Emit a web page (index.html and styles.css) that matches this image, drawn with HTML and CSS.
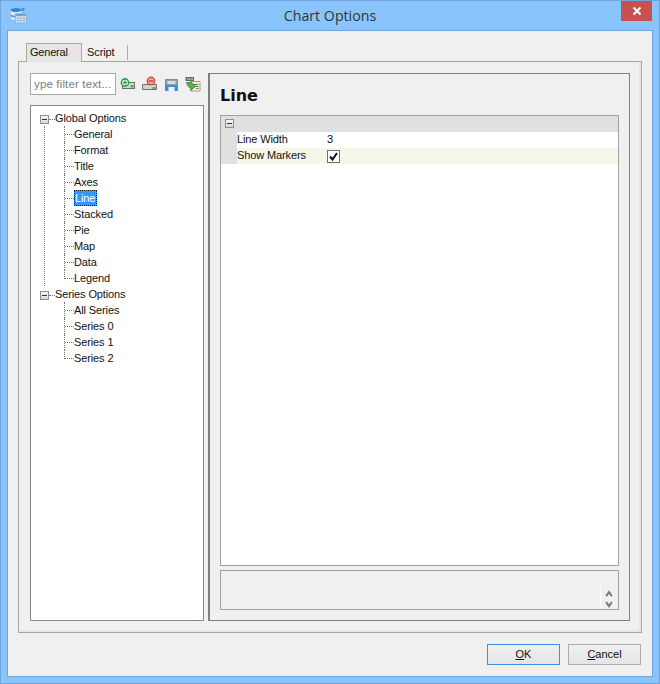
FILE: index.html
```html
<!DOCTYPE html>
<html lang="en">
<head>
<meta charset="utf-8">
<title>Chart Options</title>
<link rel="stylesheet" href="styles.css">
</head>
<body>
<div class="window">
  <header class="titlebar">
    <svg class="app-icon" width="17" height="17" viewBox="0 0 17 17">
      <path d="M.5 3C.5 .8 11.500 .8 11.500 3V11.500C11.500 13.700 .5 13.700 .5 11.500Z" fill="#dcecfa" stroke="#a9c3da" stroke-width=".7"/>
      <ellipse cx="6" cy="3" rx="5.500" ry="2" fill="#2f86dc"/>
      <path d="M.5 7C2 9 10 9 11.500 7V9C10 11 2 11 .5 9Z" fill="#4f9be2"/>
      <circle cx="13" cy="2.500" r="1.700" fill="#3f90de"/>
      <rect x="5.500" y="6.500" width="11" height="9.500" fill="#c6dcf0" stroke="#8fb0cc" stroke-width=".8"/>
      <path d="M6 7h10v2H6z" fill="#6fa6da"/>
      <path d="M7 10.500h2v1H7zM10 10.500h2v1h-2zM13 10.500h2v1h-2zM7 13h2v1H7zM10 13h2v1h-2zM13 13h2v1h-2z" fill="#86a9c9"/>
    </svg>
    <h1 class="title">Chart Options</h1>
    <button class="close" aria-label="Close">
      <svg width="10" height="10" viewBox="0 0 10 10"><path d="M1.500 1.500l7 7M8.500 1.500l-7 7" stroke="#fff" stroke-width="2"/></svg>
    </button>
  </header>
  <main class="content">
    <nav class="tabs">
      <span class="tab active">General</span>
      <span class="tab">Script</span>
    </nav>
    <section class="pane">
      <aside class="left">
        <div class="toolbar">
          <input class="filter" value="ype filter text...">
          <svg class="tool t1" width="16" height="12" viewBox="0 0 16 12">
            <rect x="2.500" y="4.500" width="12" height="6" fill="#d6d8d4" stroke="#6b6f6b"/>
            <rect x="10.500" y="7" width="3" height="2.500" fill="#57a84a"/>
            <circle cx="5" cy="4.500" r="3.600" fill="#fff" stroke="#27a34a" stroke-width="1.600"/>
            <path d="M3 4.500h4M5 2.500v4" stroke="#27a34a" stroke-width="1.300"/>
          </svg>
          <svg class="tool t2" width="16" height="15" viewBox="0 0 16 15">
            <path d="M.5 8.500h14v5H.5z" fill="#d2d2d2" stroke="#6e6e6e"/>
            <rect x="10.500" y="11" width="3" height="2" fill="#5cab3f"/>
            <circle cx="9" cy="5" r="3.700" fill="#f3aaa4" stroke="#cf4a40" stroke-width="1.400"/>
            <path d="M6.800 5h4.400" stroke="#c8352b" stroke-width="1.300"/>
          </svg>
          <svg class="tool t3" width="13" height="12" viewBox="0 0 13 12">
            <path d="M.5.5h12v6H.5z" fill="#9a9ea3" stroke="#85898e"/>
            <rect x="2.500" y="2" width="8" height="3" fill="#d9dbdd"/>
            <path d="M.5 6.500h12v5H.5z" fill="#3d8fd0" stroke="#3d8fd0"/>
            <rect x="3.500" y="8" width="6" height="4" fill="#eef4fa"/>
          </svg>
          <svg class="tool t4" width="16" height="16" viewBox="0 0 16 16">
            <path d="M5.500 5.500h9.500v9.500h-9.500z" fill="#f5f0e2" stroke="#b39a6a"/>
            <path d="M9 8.500h4.500M10 10.500h3.500M11 12.500h2.500" stroke="#5c6d7d"/>
            <rect x=".5" y="1" width="8.500" height="4" fill="#61696a"/>
            <path d="M2 3h1.500M4.200 3h1.500M6.400 3h1.500" stroke="#fff"/>
            <path d="M1.500 6.500h3.500l1 0.500 0-1 4.500 4.300-4.300 4v-2.300c-2.200 0-3.900-2-4.700-5.500z" fill="#59b34b" stroke="#2f8a3a" stroke-width=".8"/>
          </svg>
        </div>
        <div class="tree">
          <div class="row root"><span class="box"></span><span class="hdash"></span><span class="label">Global Options</span></div>
          <div class="branch">
            <div class="row leaf"><span class="label">General</span></div>
            <div class="row leaf"><span class="label">Format</span></div>
            <div class="row leaf"><span class="label">Title</span></div>
            <div class="row leaf"><span class="label">Axes</span></div>
            <div class="row leaf"><span class="label selected">Line</span></div>
            <div class="row leaf"><span class="label">Stacked</span></div>
            <div class="row leaf"><span class="label">Pie</span></div>
            <div class="row leaf"><span class="label">Map</span></div>
            <div class="row leaf"><span class="label">Data</span></div>
            <div class="row leaf end"><span class="label">Legend</span></div>
          </div>
          <div class="row root"><span class="box"></span><span class="hdash"></span><span class="label">Series Options</span></div>
          <div class="branch last">
            <div class="row leaf"><span class="label">All Series</span></div>
            <div class="row leaf"><span class="label">Series 0</span></div>
            <div class="row leaf"><span class="label">Series 1</span></div>
            <div class="row leaf end"><span class="label">Series 2</span></div>
          </div>
        </div>
      </aside>
      <section class="panel">
        <h2 class="heading">Line</h2>
        <div class="grid">
          <div class="grid-head"><span class="box"></span></div>
          <div class="prop"><span class="prop-name">Line Width</span><span class="prop-value">3</span></div>
          <div class="prop alt"><span class="prop-name">Show Markers</span><span class="prop-value">
            <svg class="check" width="13" height="13" viewBox="0 0 13 13">
              <rect x=".5" y=".5" width="12" height="12" fill="#fff" stroke="#707070"/>
              <path d="M3 6.500l2.500 3L10 3" fill="none" stroke="#111" stroke-width="2"/>
            </svg></span></div>
        </div>
        <div class="desc">
          <div class="spin">
            <svg width="8" height="21" viewBox="0 0 8 21">
              <path d="M1.200 9.200L4 5 6.800 9.200M1.200 15L4 19.200 6.800 15" fill="none" stroke="#777" stroke-width="2"/>
            </svg>
          </div>
        </div>
      </section>
    </section>
    <footer class="actions">
      <button class="btn default"><u>O</u>K</button>
      <button class="btn"><u>C</u>ancel</button>
    </footer>
  </main>
</div>
</body>
</html>
```
FILE: styles.css
```css
* { box-sizing: border-box; }
html, body { margin: 0; padding: 0; }
body {
  width: 660px;
  height: 684px;
  overflow: hidden;
  font-family: "Liberation Sans", Arial, sans-serif;
  font-size: 11px;
  color: #111;
}
.window {
  width: 660px;
  height: 684px;
  background: #89c5fc;
  border: 1px solid #6fa5da;
  display: flex;
  flex-direction: column;
}
.titlebar {
  height: 29px;
  flex: none;
  display: flex;
  align-items: flex-start;
  position: relative;
}
.app-icon { margin: 6px 0 0 9px; flex: none; }
.title {
  margin: 0;
  text-align: center;
  font: normal 14.2px/29px "Open Sans", sans-serif;
  color: #333;
  position: absolute;
  left: 0;
  right: 0;
}
.close {
  margin-left: auto;
  width: 31px;
  height: 20px;
  margin-right: 7px;
  border: 0;
  padding: 0;
  background: #c75050;
  display: flex;
  align-items: center;
  justify-content: center;
  position: relative;
}
.content {
  margin: 0 6px 6px;
  flex: 1;
  background: #f0f0f0;
  border: 1px solid #6fa5da;
  padding: 12px 10px 0;
  display: flex;
  flex-direction: column;
}
.tabs {
  display: flex;
  height: 18px;
  margin-left: 8px;
  flex: none;
}
.tab {
  padding: 1px 0 0 5px;
  line-height: 12px;
  width: 46px;
  border-right: 1px solid #a9a9a9;
  height: 15px;
  margin-top: 2px;
  letter-spacing: -.1px;
}
.tab.active {
  width: 56px;
  height: 19px;
  margin-top: 0;
  padding: 2px 0 0 3px;
  background: #e6e6e6;
  border: 1px solid #a9a9a9;
  border-bottom: 0;
  letter-spacing: -.2px;
  position: relative;
  z-index: 1;
}
.pane {
  width: 624px;
  height: 572px;
  flex: none;
  background: #f0f0f0;
  border: 1px solid #a6a6a6;
  box-shadow: inset -2px -2px 0 #e6e6e6;
  padding: 11px;
  display: flex;
  gap: 4px;
}
.left {
  width: 174px;
  flex: none;
  display: flex;
  flex-direction: column;
  gap: 10px;
}
.toolbar {
  height: 22px;
  display: flex;
  align-items: flex-start;
  flex: none;
}
.filter {
  width: 86px;
  height: 22px;
  border: 1px solid #a8a8a8;
  background: #fff;
  padding: 0 3px;
  font: 11.5px "Liberation Sans", Arial, sans-serif;
  letter-spacing: .15px;
  color: #7d7d7d;
  outline: 0;
}
.tool { flex: none; }
.t1 { margin: 5px 0 0 4px; }
.t2 { margin: 3px 0 0 6px; }
.t3 { margin: 6px 0 0 7px; }
.t4 { margin: 3px 0 0 7px; }
.tree {
  flex: 1;
  background: #fff;
  border: 1px solid #828790;
  padding: 4px 0 0 9px;
}
.row {
  height: 16px;
  display: flex;
  align-items: center;
  position: relative;
}
.box {
  width: 9px;
  height: 9px;
  flex: none;
  border: 1px solid #8a8f94;
  background: linear-gradient(#f8f8f8, #d8d8d8);
  position: relative;
}
.box::after {
  content: "";
  position: absolute;
  left: 1px;
  right: 1px;
  top: 3px;
  height: 1px;
  background: #333;
}
.root .box, .root .hdash { margin-top: 2px; }
.hdash {
  width: 6px;
  flex: none;
  border-top: 1px dotted #777;
}
.label {
  line-height: 14px;
  letter-spacing: -.12px;
  white-space: nowrap;
}
.branch {
  margin-left: 4px;
  border-left: 1px dotted #777;
  padding-left: 19px;
}
.branch.last { border-left: 0; padding-left: 20px; }
.leaf { padding-left: 10px; }
.leaf::before {
  content: "";
  position: absolute;
  left: 0;
  top: 0;
  bottom: 0;
  border-left: 1px dotted #777;
}
.leaf.end::before { bottom: 7px; }
.leaf::after {
  content: "";
  position: absolute;
  left: 1px;
  width: 9px;
  top: 8px;
  border-top: 1px dotted #777;
}
.label.selected {
  background: #3399ff;
  color: #fff;
  outline: 1px dotted #222;
  outline-offset: -1px;
  padding-left: 1px;
  height: 16px;
  line-height: 16px;
  width: 23px;
}
.panel {
  flex: 1;
  border: 1px solid #808080;
  border-left-width: 2px;
  padding: 0 10px 11px;
  display: flex;
  flex-direction: column;
}
.heading {
  margin: 0;
  height: 41px;
  flex: none;
  font: bold 16px/43px "DejaVu Sans", sans-serif;
  color: #111;
}
.grid {
  height: 451px;
  flex: none;
  background: #fff;
  border: 1px solid #a0a0a0;
}
.grid-head {
  height: 16px;
  background: #e0e0e0;
  padding: 3px 0 0 4px;
}
.grid-head .box { display: block; }
.prop {
  height: 16px;
  display: flex;
  align-items: center;
  background: #fff;
  border-left: 16px solid #e0e0e0;
  padding-bottom: 3px;
}
.prop.alt { background: #f6f6e9; }
.prop-name { width: 89px; letter-spacing: -.12px; }
.prop-value { display: flex; align-items: center; padding-left: 1px; }
.check { margin-top: 3px; }
.desc {
  height: 40px;
  margin-top: 4px;
  flex: none;
  border: 1px solid #a0a0a0;
  display: flex;
  justify-content: flex-end;
  align-items: flex-end;
}
.spin {
  width: 18px;
  height: 23px;
  border-left: 1px solid #fff;
  padding: 1px 0 0 4px;
}
.spin svg { display: block; }
.actions {
  display: flex;
  justify-content: flex-end;
  gap: 8px;
  margin: 11px 1px 0 0;
}
.btn {
  width: 73px;
  height: 21px;
  border: 1px solid #acacac;
  background: linear-gradient(#f0f0f0, #e5e5e5);
  padding: 0 0 2px;
  font: 11px "Liberation Sans", Arial, sans-serif;
  color: #111;
}
.btn.default { border-color: #3c8fe6; }
```
